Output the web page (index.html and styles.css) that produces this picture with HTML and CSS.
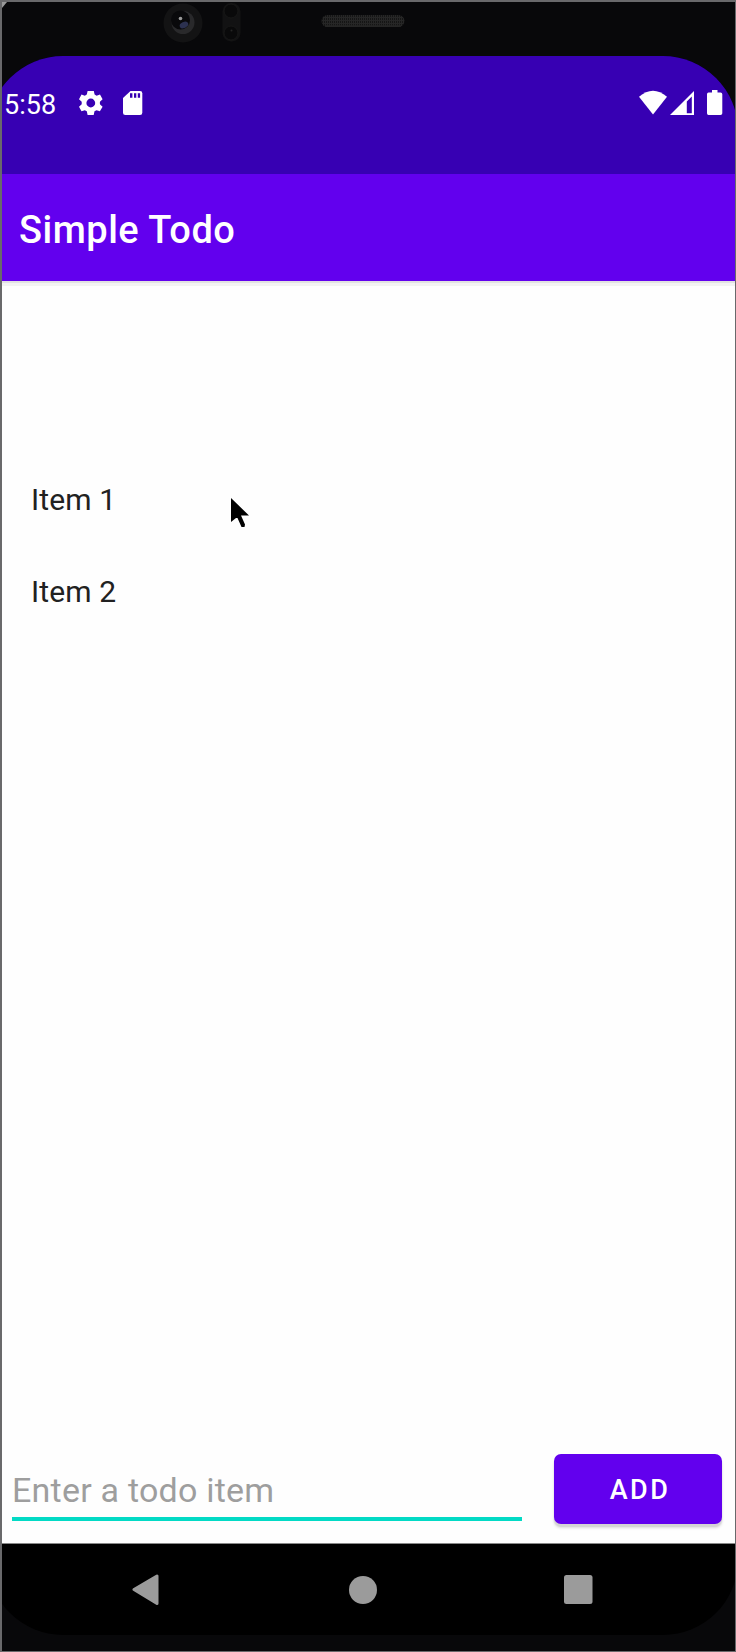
FILE: index.html
```
<!DOCTYPE html>
<html lang="en">
<head>
<meta charset="utf-8">
<title>Simple Todo</title>
<link rel="stylesheet" href="styles.css">
</head>
<body>
<div class="device">
  <div class="bezel-top">
    <svg class="hardware" width="733" height="54" viewBox="2 2 733 54">
      <defs>
        <pattern id="mesh" width="2" height="3" patternUnits="userSpaceOnUse">
          <rect width="2" height="3" fill="#262626"/><rect width="1" height="2" fill="#151515"/>
        </pattern>
      </defs>
      <path d="M2 2h5L2 8z" fill="#999"/>
      <circle cx="183" cy="23" r="19.5" fill="#131314"/>
      <circle cx="183" cy="22.500" r="11.500" fill="#29292b"/>
      <circle cx="180.500" cy="20" r="9.500" fill="#09090b"/>
      <ellipse cx="184" cy="25" rx="4.500" ry="3" fill="#2c3150" transform="rotate(-25 184 25)"/>
      <circle cx="180.500" cy="18.500" r="1.800" fill="#999"/>
      <rect x="222.500" y="3" width="18" height="38.500" rx="8.500" fill="#121213"/>
      <circle cx="231" cy="11" r="7" fill="#09090a" stroke="#171717"/>
      <circle cx="231" cy="33" r="7" fill="#09090a" stroke="#171717"/>
      <circle cx="231.500" cy="30.500" r="1" fill="#252525"/>
      <rect x="321.500" y="15" width="83" height="12" rx="6" fill="url(#mesh)"/>
      <path d="M325 26h76" stroke="#262626" stroke-width="1.500"/>
    </svg>
  </div>
  <div class="screen">
    <header class="status-bar">
      <span class="time">5:58</span>
      <svg class="gear" width="24" height="26" viewBox="0 0 24 26">
        <path fill="#fff" fill-rule="evenodd" d="M8.600 1h6.200l.8 3.600 2 1.100 3.400-1.200 2.600 4.800-2.700 2.500v2.400l2.700 2.500-2.700 4.600-3.400-1.100-2 1.100-.8 3.700H8.600l-.8-3.700-2-1.100-3.300 1.100-2.500-4.600 2.700-2.500v-2.400L0 9.300l2.500-4.800 3.300 1.200 2-1.100zM11.800 8.600a4.400 4.400 0 1 0 0 8.800a4.400 4.400 0 1 0 0-8.800z"/>
      </svg>
      <svg class="sd" width="20" height="26" viewBox="0 0 20 26">
        <path fill="#fff" d="M7.500 1H17q2.300 0 2.300 2.300v19.400q0 2.200-2.300 2.200H2.300Q0 24.900 0 22.700V8z"/>
        <path fill="#3700b3" d="M7 3.200h2.400v4.600H7zM11 3.200h2.300v4.600H11zM14.800 3.200h2.300v4.600h-2.300z"/>
      </svg>
      <div class="signals">
        <svg width="28" height="26" viewBox="0 0 28 26"><path fill="#fff" d="M0 6.800Q14-5.300 28 6.800L14 24.500z"/></svg>
        <svg class="cell" width="25" height="26" viewBox="0 0 25 26"><path fill="#fff" fill-rule="evenodd" d="M24 1v24H0zM16.800 11.500v11.700h5V6.500z"/></svg>
        <svg class="battery" width="16" height="26" viewBox="0 0 16 26"><path fill="#fff" d="M5 0h5.500v2.400h3q1.800 0 1.800 1.800v19q0 1.700-1.800 1.700h-12Q0 24.900 0 23.200v-19q0-1.800 1.500-1.800H5z"/></svg>
      </div>
    </header>
    <div class="app-bar"><h1 class="title">Simple Todo</h1></div>
    <main class="content">
      <ul class="items">
        <li class="item">Item 1</li>
        <li class="item">Item 2</li>
      </ul>
      <form class="entry">
        <input class="field" type="text" placeholder="Enter a todo item" aria-label="Todo item">
        <button class="add" type="button">ADD</button>
      </form>
    </main>
    <nav class="nav-bar">
      <svg width="28" height="32" viewBox="0 0 28 32"><path d="M2 15.500L25 2v27.500z" fill="#9b9b9b" stroke="#9b9b9b" stroke-width="3" stroke-linejoin="round"/></svg>
      <svg class="home" width="28" height="28" viewBox="0 0 28 28"><circle cx="14" cy="14" r="14" fill="#9b9b9b"/></svg>
      <svg width="29" height="29" viewBox="0 0 29 29"><rect width="28.500" height="29" rx="2.500" fill="#9b9b9b"/></svg>
    </nav>
  </div>
  <svg class="cursor" width="20" height="31" viewBox="0 0 20 31"><path d="M0 0l18 17.500h-8l4 9L13.500 29h-3L6.500 20h-1.500L0 24z"/></svg>
</div>
</body>
</html>
```
FILE: styles.css
```
* { box-sizing: border-box; }

body {
  margin: 0;
  height: 1652px;
  padding: 2px 1px 1px 2px;
  background: #69696b;
  font-family: Roboto, "Liberation Sans", sans-serif;
}

svg { display: block; flex: none; }

.device {
  position: relative;
  height: 1649px;
  overflow: hidden;
  background: #08080a;
}

.bezel-top { height: 54px; }

/* The display is slightly wider than the visible frame. */
.screen {
  display: flex;
  flex-direction: column;
  height: 1579px;
  margin: 0 -3px 0 -14px;
  border-radius: 75px;
  overflow: hidden;
  background: #000;
}

.status-bar {
  display: flex;
  align-items: center;
  height: 118px;
  padding: 0 15px 22px 16px;
  background: #3700b3;
  color: #fff;
}

.time {
  width: 75px;
  padding-top: 2px;
  font-size: 27px;
  line-height: 32px;
}

.gear, .sd { margin-top: -2px; }
.sd { margin-left: 20px; }

.signals {
  display: flex;
  margin-top: -2px;
  margin-left: auto;
}

.cell { margin-left: 3px; }
.battery { margin-left: 12px; }

.app-bar {
  position: relative;
  height: 107px;
  padding: 8px 0 0 31px;
  background: #6200ee;
  box-shadow: 0 2px #e2e2e2, 0 5px #f3f3f3;
}

.title {
  margin: 0;
  color: #fff;
  font-size: 38px;
  font-weight: 500;
  letter-spacing: 0.5px;
  line-height: 97px;
}

.content {
  display: flex;
  flex-direction: column;
  justify-content: space-between;
  height: 1263px;
  padding: 173px 16px 19px 24px;
  border-bottom: 1px solid #888;
  background: #fefefe;
}

.items { margin: 0; padding: 0 0 0 19px; list-style: none; }

.item {
  height: 91.5px;
  color: #212121;
  font-size: 30px;
  letter-spacing: 0.1px;
  line-height: 92px;
}

.entry {
  display: flex;
  justify-content: space-between;
  height: 70px;
}

.field {
  width: 509.5px;
  height: 67px;
  padding: 9px 0 0;
  border: 0;
  border-bottom: 4px solid #03dac5;
  background: none;
  font-family: inherit;
  font-size: 34px;
  letter-spacing: 0.22px;
}

.field::placeholder { color: #9e9e9e; opacity: 1; }

.add {
  width: 168px;
  height: 70px;
  padding: 2px 0 0 4px;
  border: 0;
  border-radius: 7px;
  background: #6200ee;
  box-shadow: 0 3px 1px #d5d5d5, 0 4px 3px #ddd;
  color: #fff;
  font-family: inherit;
  font-size: 27px;
  font-weight: 500;
  letter-spacing: 2.4px;
}

.nav-bar {
  display: flex;
  align-items: center;
  justify-content: space-between;
  height: 91px;
  padding: 0 145px 0 144px;
}

.home { margin-left: 2px; }

.cursor {
  position: absolute;
  left: 229px;
  top: 496px;
}
```
